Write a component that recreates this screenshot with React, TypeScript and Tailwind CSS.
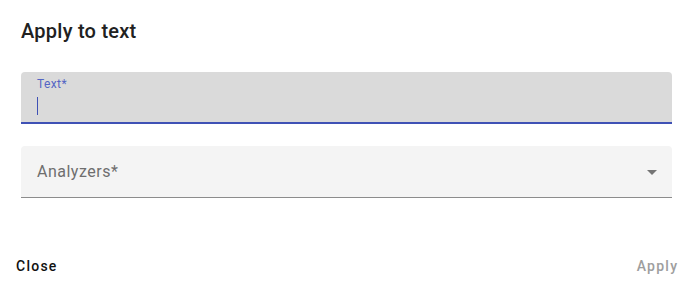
import React from "react";

export default function App() {
  return (
    <div className="w-[697px] h-[291px] bg-white overflow-hidden font-['Roboto',sans-serif]">
      <h2 className="pt-[19px] pl-[21px] text-[20px] leading-[24px] font-medium text-[#212121] tracking-[0.25px]">
        Apply to text
      </h2>
      <div className="mx-[21px] mt-[29px] w-[651px]">
        <div className="h-[52px] rounded-t-[4px] bg-[#dadada] border-b-2 border-[#3f51b5] pl-[16px]">
          <div className="pt-[4px] text-[12px] leading-[16px] text-[#5465c4] tracking-[0.4px]">Text*</div>
          <div className="mt-[5px] w-px h-[18px] bg-[#3f51b5]" />
        </div>
        <div className="mt-[22px] h-[52px] rounded-t-[4px] bg-[#f4f4f4] border-b border-[#8c8c8c] pl-[16px] pr-[15px] flex items-center justify-between">
          <span className="text-[16px] leading-[20px] text-[#6e6e6e] tracking-[0.5px]">Analyzers*</span>
          <svg width="10" height="5" viewBox="0 0 10 5" className="mt-[1px]">
            <path d="M0 0 L10 0 L5 5 Z" fill="#757575" />
          </svg>
        </div>
      </div>
      <div className="mt-[58px] flex justify-between pl-[16px] pr-[20px] text-[14px] leading-[20px] font-medium tracking-[1.25px]">
        <span className="text-[#111111]">Close</span>
        <span className="text-[#9e9e9e] -mr-[1.25px]">Apply</span>
      </div>
    </div>
  );
}
